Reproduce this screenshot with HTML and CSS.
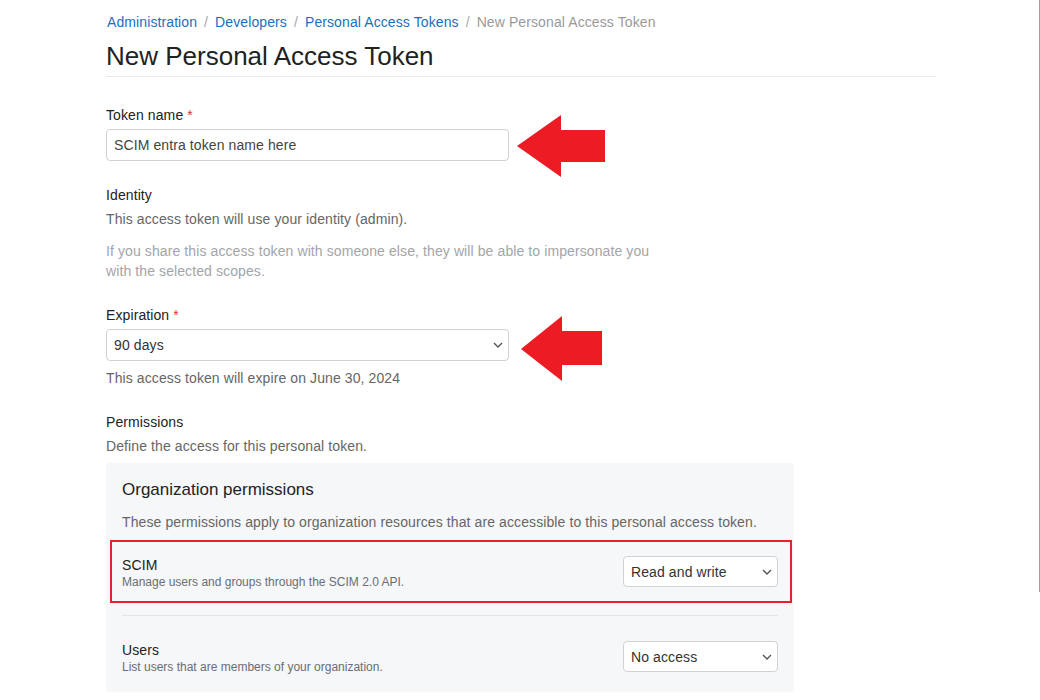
FILE: index.html
```html
<!DOCTYPE html>
<html lang="en">
<head>
<meta charset="utf-8">
<title>New Personal Access Token</title>
<link rel="stylesheet" href="styles.css">
</head>
<body>
<div class="page">
  <nav class="breadcrumb">
    <a href="#">Administration</a><span class="sep">/</span><a href="#">Developers</a><span class="sep">/</span><a href="#">Personal Access Tokens</a><span class="sep">/</span><span class="current">New Personal Access Token</span>
  </nav>
  <h1 class="title">New Personal Access Token</h1>

  <form class="form">
    <div class="field field-name">
      <label class="label">Token name <span class="req">*</span></label>
      <input class="input" type="text" value="SCIM entra token name here">
      <svg class="arrow arrow-1" width="88" height="62" viewBox="0 0 88 62"><polygon points="0,31 44,0 44,15 88,15 88,47 44,47 44,62" fill="#ed1c24"/></svg>
    </div>

    <div class="field field-identity">
      <div class="label">Identity</div>
      <p class="help">This access token will use your identity (admin).</p>
      <p class="muted">If you share this access token with someone else, they will be able to impersonate you with the selected scopes.</p>
    </div>

    <div class="field field-expiration">
      <label class="label">Expiration <span class="req">*</span></label>
      <div class="select-wrap select-wide">
        <select class="select"><option>90 days</option></select>
        <svg class="chev" width="10" height="6" viewBox="0 0 10 6"><path d="M1 1l4 4 4-4" fill="none" stroke="#555" stroke-width="1.4"/></svg>
      </div>
      <p class="help help-expire">This access token will expire on June 30, 2024</p>
      <svg class="arrow arrow-2" width="81" height="65" viewBox="0 0 81 65"><polygon points="0,33 41,0 41,15 81,15 81,49 41,49 41,65" fill="#ed1c24"/></svg>
    </div>

    <div class="field field-permissions">
      <div class="label">Permissions</div>
      <p class="help">Define the access for this personal token.</p>

      <section class="panel">
        <h2 class="panel-title">Organization permissions</h2>
        <p class="help panel-desc">These permissions apply to organization resources that are accessible to this personal access token.</p>

        <div class="perm-row highlighted">
          <div class="perm-text">
            <div class="perm-name">SCIM</div>
            <div class="perm-desc">Manage users and groups through the SCIM 2.0 API.</div>
          </div>
          <div class="select-wrap select-small">
            <select class="select"><option>Read and write</option></select>
            <svg class="chev" width="10" height="6" viewBox="0 0 10 6"><path d="M1 1l4 4 4-4" fill="none" stroke="#555" stroke-width="1.4"/></svg>
          </div>
        </div>
        <div class="divider"></div>
        <div class="perm-row">
          <div class="perm-text">
            <div class="perm-name">Users</div>
            <div class="perm-desc">List users that are members of your organization.</div>
          </div>
          <div class="select-wrap select-small">
            <select class="select"><option>No access</option></select>
            <svg class="chev" width="10" height="6" viewBox="0 0 10 6"><path d="M1 1l4 4 4-4" fill="none" stroke="#555" stroke-width="1.4"/></svg>
          </div>
        </div>
      </section>
    </div>
  </form>
</div>
<div class="edge"></div>
</body>
</html>
```

FILE: styles.css
```css
* { box-sizing: border-box; }

html, body {
  margin: 0;
  padding: 0;
  background: #ffffff;
  height: 700px;
  overflow: hidden;
}

body {
  font-family: "Liberation Sans", Arial, sans-serif;
  font-size: 14px;
  letter-spacing: 0.1px;
  color: #222;
}

.page {
  width: 830px;
  margin-left: 106px;
  padding-top: 12px;
}

.breadcrumb {
  font-size: 14px;
  line-height: 20px;
  padding-left: 1px;
}

.breadcrumb a {
  color: #1a70c0;
  text-decoration: none;
}

.breadcrumb .sep {
  color: #a8a8a8;
  margin: 0 7px;
}

.breadcrumb .current {
  color: #9a9a9a;
}

.title {
  margin: 9px 0 0;
  font-size: 26px;
  line-height: 30px;
  font-weight: normal;
  letter-spacing: 0;
  color: #222;
  padding-bottom: 5px;
  border-bottom: 1px solid #e8eaed;
}

.form {
  padding-top: 28px;
}

.field {
  position: relative;
}

.field + .field {
  margin-top: 24px;
}

.label {
  display: block;
  font-size: 14px;
  line-height: 20px;
  color: #222;
  margin-bottom: 4px;
}

.req {
  color: #e2343c;
}

.help {
  margin: 0;
  font-size: 14px;
  line-height: 20px;
  color: #666;
}

.help-expire {
  margin-top: 7px;
}

.muted {
  margin: 12px 0 0;
  max-width: 560px;
  font-size: 14px;
  line-height: 20px;
  color: #a2a5aa;
}

.input {
  display: block;
  width: 403px;
  height: 32px;
  border: 1px solid #cfd2d6;
  border-radius: 4px;
  padding: 0 7px;
  font-family: inherit;
  font-size: 14px;
  letter-spacing: 0.1px;
  color: #444;
  background: #fff;
}

.select-wrap {
  position: relative;
}

.select {
  display: block;
  width: 100%;
  height: 100%;
  appearance: none;
  -webkit-appearance: none;
  border: 1px solid #cfd2d6;
  border-radius: 4px;
  background: #fff;
  padding: 0 7px;
  font-family: inherit;
  font-size: 14px;
  letter-spacing: 0.1px;
  color: #333;
}

.select-wide {
  width: 403px;
  height: 32px;
}

.select-small {
  width: 155px;
  height: 31px;
  flex: none;
}

.chev {
  position: absolute;
  right: 6px;
  top: 50%;
  margin-top: -3px;
  pointer-events: none;
}

.arrow {
  position: absolute;
}

.arrow-1 {
  left: 411px;
  top: 10px;
}

.arrow-2 {
  left: 415px;
  top: 11px;
}

.panel {
  margin-top: 7px;
  width: 688px;
  background: #f6f7f9;
  border-radius: 4px;
  padding: 15px 16px 2px;
}

.panel-title {
  margin: 0;
  font-size: 17px;
  line-height: 24px;
  font-weight: normal;
  letter-spacing: 0;
  color: #222;
}

.panel-desc {
  margin-top: 10px;
}

.perm-row {
  position: relative;
  display: flex;
  justify-content: space-between;
  align-items: flex-start;
  padding: 15px 0;
}

.panel-desc + .perm-row {
  margin-top: 9px;
}

.highlighted::after {
  content: "";
  position: absolute;
  left: -12px;
  right: -14px;
  top: -1px;
  bottom: 2px;
  border: 2px solid #e8202a;
}

.perm-name {
  font-size: 14px;
  line-height: 18px;
  color: #222;
}

.perm-desc {
  font-size: 12px;
  line-height: 16px;
  letter-spacing: 0;
  color: #6a6d72;
}

.divider {
  margin-top: 10px;
  margin-bottom: 10px;
  border-top: 1px solid #e3e5e8;
}

.edge {
  position: fixed;
  right: 0;
  top: 0;
  width: 1px;
  height: 592px;
  background: #a0a0a0;
}
```
